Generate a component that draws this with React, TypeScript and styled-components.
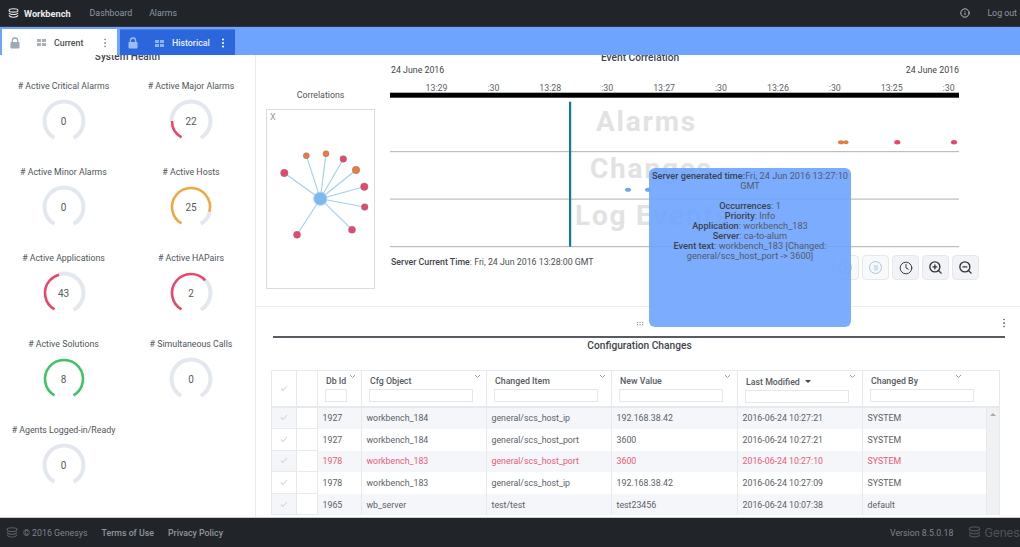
import React from 'react';
import styled, { createGlobalStyle } from 'styled-components';
import { Clock, EllipsisVertical, Info, Pause, Play, ZoomIn, ZoomOut } from 'lucide-react';

const GlobalStyle = createGlobalStyle`
  html, body {
    margin: 0;
    padding: 0;
    height: 100%;
    overflow: hidden;
    background: #fff;
    font-family: Roboto, "Liberation Sans", sans-serif;
    font-size: 8.8px;
    color: #4a4f55;
  }
  * { box-sizing: border-box; }
`;

const Page = styled.div`
  width: 1020px;
  height: 547px;
  display: flex;
  flex-direction: column;
  overflow: hidden;
  position: relative;
`;

const Header = styled.header`
  height: 27px;
  flex: none;
  background: #212429;
  border-bottom: 1px solid #34383e;
  display: flex;
  align-items: center;
  padding: 0 3px 0 8px;
  color: #8f98a3;
  position: relative;
  z-index: 3;
`;

const Brand = styled.div`
  display: flex;
  align-items: center;
  gap: 5px;
  color: #e9ecef;
  font-weight: 700;
  font-size: 9.2px;
  margin-right: 19px;
`;

const NavLink = styled.a`
  margin-right: 17px;
  font-size: 8.8px;
`;

const HeaderRight = styled.div`
  margin-left: auto;
  display: flex;
  align-items: center;
  gap: 17px;
  font-size: 8.8px;
`;

const TabBar = styled.div`
  height: 28px;
  flex: none;
  background: #6ea3fe;
  display: flex;
  padding: 2px 0 0 2px;
  gap: 3px;
  position: relative;
  z-index: 2;
`;

const Tab = styled.div<{ $active?: boolean }>`
  width: 115px;
  height: 26px;
  display: flex;
  align-items: center;
  padding: 1px 0 0 8px;
  font-size: 8.8px;
  font-weight: 500;
  background: ${p => (p.$active ? '#fff' : '#2c66dc')};
  color: ${p => (p.$active ? '#4a4f55' : '#e8f0ff')};
  border-top: ${p => (p.$active ? 'none' : '1px solid #4a80e8')};
`;

const TabName = styled.span`
  width: 45px;
  margin-left: 8px;
  white-space: nowrap;
`;

const GridGlyph = styled.span<{ $light?: boolean }>`
  display: grid;
  grid-template-columns: 4px 4px;
  grid-auto-rows: 3px;
  gap: 1px;
  margin-left: 17px;
  span {
    background: ${p => (p.$light ? '#8fb4f5' : '#a9afb7')};
  }
`;

const Dots = styled.span<{ $color: string }>`
  display: inline-flex;
  color: ${p => p.$color};
`;

const Body = styled.main`
  flex: 1;
  min-height: 0;
  display: flex;
`;

const HealthPanel = styled.section`
  width: 256px;
  flex: none;
  border-right: 1px solid #e8ebef;
  text-align: center;
`;

const HealthTitle = styled.h2`
  margin: -5px 0 0;
  font-size: 10px;
  line-height: 13px;
  font-weight: 500;
  color: #3f444a;
`;

const GaugeGrid = styled.div`
  display: grid;
  grid-template-columns: 127px 128px;
  grid-auto-rows: 86px;
  margin-top: 17px;
`;

const GaugeCell = styled.div`
  display: flex;
  flex-direction: column;
  align-items: center;
`;

const GaugeLabel = styled.div`
  height: 13px;
  line-height: 13px;
  font-size: 8.8px;
  white-space: nowrap;
  color: #50555b;
`;

const GaugeDial = styled.div`
  position: relative;
  width: 46px;
  height: 46px;
  margin-top: 5px;
`;

const GaugeValue = styled.span`
  position: absolute;
  inset: 0;
  display: flex;
  align-items: center;
  justify-content: center;
  font-size: 10px;
  color: #565b61;
`;

const RightColumn = styled.div`
  flex: 1;
  min-width: 0;
  display: flex;
  flex-direction: column;
`;

const CorrelationPanel = styled.section`
  height: 252px;
  flex: none;
  border-bottom: 1px solid #e8ebef;
  display: flex;
  padding-left: 10px;
`;

const GraphColumn = styled.div`
  width: 109px;
  flex: none;
  padding-top: 34px;
  text-align: center;
`;

const GraphTitle = styled.div`
  font-size: 8.8px;
  line-height: 12px;
  color: #50555b;
  margin-bottom: 8px;
`;

const GraphBox = styled.div`
  position: relative;
  height: 180px;
  border: 1px solid #dcdcdc;
`;

const CloseX = styled.span`
  position: absolute;
  left: 3px;
  top: 2px;
  font-size: 9px;
  color: #9a9a9a;
`;

const TimelineColumn = styled.div`
  width: 569px;
  margin-left: 15px;
  flex: none;
`;

const EventTitle = styled.h2`
  margin: -3px 0 0;
  text-align: center;
  font-size: 10.2px;
  line-height: 12px;
  font-weight: 500;
  color: #3f444a;
  padding-right: 69px;
`;

const DateRow = styled.div`
  display: flex;
  justify-content: space-between;
  padding-left: 1px;
  font-size: 8.8px;
  line-height: 12px;
  color: #3f444a;
`;

const ChartFrame = styled.svg`
  display: block;
  margin-top: 3px;
`;

const ServerTime = styled.div`
  margin-top: 7px;
  padding-left: 1px;
  font-size: 8.8px;
  line-height: 12px;
  b { font-weight: 500; color: #3f444a; }
`;

const Controls = styled.div`
  display: flex;
  gap: 3px;
  margin-left: 442px;
  margin-top: -13px;
`;

const ControlButton = styled.button<{ $faded?: boolean }>`
  width: 27px;
  height: 25px;
  flex: none;
  padding: 0;
  display: flex;
  align-items: center;
  justify-content: center;
  background: ${p => (p.$faded ? '#f7f9fb' : '#f1f3f6')};
  border: 1px solid #e5e8ec;
  border-radius: 4px;
  color: ${p => (p.$faded ? '#a9c6e2' : '#31363c')};
`;

const FadedCircle = styled.span`
  width: 13px;
  height: 13px;
  border: 1px solid #a9c6e2;
  border-radius: 50%;
  display: flex;
  align-items: center;
  justify-content: center;
`;

const Tooltip = styled.div`
  position: absolute;
  left: 649px;
  top: 168px;
  width: 202px;
  height: 159px;
  padding: 3px 2px;
  background: rgba(110, 163, 254, 0.9);
  border-radius: 6px;
  text-align: center;
  font-size: 9.2px;
  line-height: 10px;
  color: #545b68;
  z-index: 4;
  b { font-weight: 500; color: #3c424c; }
`;

const TipGap = styled.div`
  height: 10px;
`;

const ConfigPanel = styled.section`
  flex: 1;
  min-height: 0;
  overflow: hidden;
  padding: 0 14px 0 17px;
`;

const PanelHandle = styled.div`
  height: 31px;
  display: flex;
  align-items: center;
  justify-content: flex-end;
  border-bottom: 2px solid #575c62;
  color: #6d737a;
  position: relative;
  padding-top: 2px;
  margin-right: 1px;
`;

const HandleMenu = styled(EllipsisVertical)`
  margin-right: -5px;
`;

const Grip = styled.span`
  position: absolute;
  left: 363px;
  top: 14px;
  width: 8px;
  height: 5px;
  background-image: radial-gradient(#3f444a 0.8px, transparent 0.9px);
  background-size: 2.7px 2.5px;
`;

const ConfigTitle = styled.h3`
  margin: 1px 0 0;
  text-align: center;
  font-size: 10.2px;
  line-height: 13px;
  font-weight: 500;
  color: #3f444a;
`;

const TableFrame = styled.div`
  margin-top: 18px;
  margin-left: -2px;
  width: 729px;
  border: 1px solid #e6eaef;
  border-bottom: none;
`;

const HeadRow = styled.div`
  display: grid;
  grid-template-columns: 25px 21px 44px 125px 125px 126px 125px 1fr;
  height: 36.5px;
  border-bottom: 2px solid #e6eaef;
`;

const HeadCell = styled.div<{ $sorted?: boolean }>`
  position: relative;
  border-right: 1px solid #e6eaef;
  padding: ${p => (p.$sorted ? '5px' : '4px')} 8px 0 8px;
  font-size: 8.8px;
  font-weight: 500;
  line-height: 12px;
  color: #565b61;
  white-space: nowrap;
  &:last-child { border-right: none; }
`;

const CheckHead = styled(HeadCell)`
  display: flex;
  align-items: center;
  justify-content: center;
  padding: 0;
`;

const Chevron = styled.svg<{ $right: number }>`
  position: absolute;
  right: ${p => p.$right}px;
  top: 3px;
`;

const FilterInput = styled.div<{ $w: number }>`
  width: ${p => p.$w}px;
  height: 13px;
  margin: 2px 0 0 -1px;
  border: 1px solid #e3e8ee;
  background: #fff;
`;

const SortCaret = styled.i`
  display: inline-block;
  margin-left: 5px;
  vertical-align: 2px;
  border-left: 3px solid transparent;
  border-right: 3px solid transparent;
  border-top: 3px solid #3f444a;
`;

const Row = styled.div<{ $striped: boolean; $alert?: boolean }>`
  display: grid;
  grid-template-columns: 25px 21px 44px 125px 125px 126px 125px 124px 12px;
  height: 21.6px;
  background: ${p => (p.$striped ? '#f4f6f9' : '#fff')};
  color: ${p => (p.$alert ? '#ea5a78' : '#5c6167')};
`;

const Cell = styled.div`
  display: flex;
  align-items: center;
  padding-left: 4.5px;
  border-right: 1px solid #e6eaef;
  font-size: 8.8px;
  white-space: nowrap;
`;

const CheckCell = styled(Cell)<{ $striped: boolean }>`
  justify-content: center;
  padding: 0;
  background: ${p => (p.$striped ? '#f4f6f9' : '#fff')};
  border-bottom: 1px solid #e6eaef;
`;

const ScrollCell = styled.div`
  background: #f0f1f2;
  display: flex;
  justify-content: center;
  padding-top: 5px;
`;

const ScrollArrow = styled.i`
  border-left: 3px solid transparent;
  border-right: 3px solid transparent;
  border-bottom: 3px solid #a8abaf;
  height: 0;
`;

const Footer = styled.footer`
  height: 30px;
  flex: none;
  background: #212429;
  border-top: 1px solid #c9ccd0;
  display: flex;
  align-items: center;
  padding-left: 6px;
  color: #7e858d;
  font-size: 8.8px;
  overflow: hidden;
`;

const Copyright = styled.span`
  margin-left: 5px;
`;

const FooterLink = styled.a`
  font-weight: 500;
  color: #8f969e;
  margin-left: 14px;
`;

const FooterRight = styled.div`
  margin-left: auto;
  flex: none;
  display: flex;
  align-items: center;
  gap: 14px;
  margin-right: -12px;
`;

const GenesysWord = styled.span`
  display: flex;
  align-items: center;
  gap: 4px;
  font-size: 12.5px;
  color: #4e5359;
`;

const StackIcon = ({ size, color }: { size: number; color: string }) => (
  <svg width={size} height={size} viewBox="0 0 16 16" fill="none" stroke={color} strokeWidth="1.5">
    <ellipse cx="8" cy="3.5" rx="6.5" ry="2.5" />
    <path d="M1.5 7c.6 1.6 3.2 2.6 6.5 2.6s5.9-1 6.5-2.6" />
    <path d="M1.5 10.5c.6 1.6 3.2 2.8 6.5 2.8s5.9-1.2 6.5-2.8" />
  </svg>
);

const LockIcon = ({ color }: { color: string }) => (
  <svg width="10" height="12" viewBox="0 0 10 12" fill="none">
    <path d="M2.4 5.5V3.6a2.6 2.6 0 0 1 5.2 0v1.9" stroke={color} strokeWidth="1.3" />
    <rect x="0.5" y="5" width="9" height="6.5" rx="0.8" fill={color} />
  </svg>
);

const Gauge = ({ label, value, share, color }: { label: string; value: number; share: number; color: string }) => {
  // the dial is a 300 degree arc, open at the bottom
  const c = 23;
  const arc = (r: number) => {
    const point = (deg: number) => {
      const a = (deg * Math.PI) / 180;
      return `${c + r * Math.sin(a)} ${c + r * Math.cos(a)}`;
    };
    return `M ${point(-30)} A ${r} ${r} 0 1 1 ${point(30)}`;
  };
  return (
    <GaugeCell>
      <GaugeLabel>{label}</GaugeLabel>
      <GaugeDial>
        <svg width="46" height="46" viewBox="0 0 46 46" fill="none">
          <path d={arc(19.5)} stroke="#e3e8ef" strokeWidth="4" pathLength={100} strokeDasharray={`0 ${share} ${100 - share} 100`} />
          {share > 0 && (
            <path d={arc(19)} stroke={color} strokeWidth="2.6" pathLength={100} strokeDasharray={`${share} 100`} />
          )}
        </svg>
        <GaugeValue>{value}</GaugeValue>
      </GaugeDial>
    </GaugeCell>
  );
};

const RED = '#e8476b';
const gauges = [
  { label: '# Active Critical Alarms', value: 0, share: 0, color: RED },
  { label: '# Active Major Alarms', value: 22, share: 20, color: RED },
  { label: '# Active Minor Alarms', value: 0, share: 0, color: RED },
  { label: '# Active Hosts', value: 25, share: 85, color: '#f2a641' },
  { label: '# Active Applications', value: 43, share: 45, color: RED },
  { label: '# Active HAPairs', value: 2, share: 66, color: RED },
  { label: '# Active Solutions', value: 8, share: 100, color: '#3fc463' },
  { label: '# Simultaneous Calls', value: 0, share: 0, color: RED },
  { label: '# Agents Logged-in/Ready', value: 0, share: 0, color: RED },
];

const graphNodes = [
  { x: 17.3, y: 63, r: 3.7, c: RED },
  { x: 39.3, y: 45.7, r: 3, c: '#ea7b3d' },
  { x: 59, y: 43.7, r: 3, c: '#ea7b3d' },
  { x: 76.3, y: 49, r: 3.3, c: RED },
  { x: 89, y: 60, r: 3.7, c: '#ea7b3d' },
  { x: 97.3, y: 76.7, r: 3.7, c: RED },
  { x: 97.7, y: 97, r: 3.3, c: RED },
  { x: 85, y: 119.7, r: 3.5, c: RED },
  { x: 30, y: 124.7, r: 3.5, c: RED },
];

const CorrelationGraph = () => (
  <svg width="107" height="178" viewBox="0 0 107 178">
    {graphNodes.map(n => (
      <line key={`${n.x}-${n.y}`} x1="53.3" y1="88.7" x2={n.x} y2={n.y} stroke="#a2d0e8" strokeWidth="1.1" />
    ))}
    {graphNodes.map(n => (
      <circle key={`${n.x}/${n.y}`} cx={n.x} cy={n.y} r={n.r} fill={n.c} stroke="#8d7078" strokeWidth="0.5" />
    ))}
    <circle cx="53.3" cy="88.7" r="6.6" fill="#7db9ee" stroke="#a8d2f2" strokeWidth="1" />
  </svg>
);

const ticks = ['13:29', ':30', '13:28', ':30', '13:27', ':30', '13:26', ':30', '13:25', ':30'];

// timeline plot, x and y are relative to the frame that starts at page x 390, y 79
const Timeline = () => (
  <ChartFrame width="569" height="170" viewBox="0 0 569 170" fontFamily="Roboto, sans-serif">
    {ticks.map((t, i) => (
      <text key={i} x={46.5 + i * 56.9} y={12} textAnchor="middle" fontSize="8.8" fill="#5c6167">{t}</text>
    ))}
    <rect x="0" y="13.7" width="569" height="5" fill="#000" />
    <g fontSize="28" fontWeight="700" fill="#e2e2e2" letterSpacing="1.8">
      <text x="206" y="52">Alarms</text>
      <text x="200" y="99">Changes</text>
      <text x="185" y="146">Log Events</text>
    </g>
    <g fill="#bdbdbd">
      <rect x="0" y="72" width="569" height="1.2" />
      <rect x="0" y="119.5" width="569" height="1.2" />
      <rect x="0" y="167" width="569" height="1.2" />
    </g>
    <rect x="179" y="22.7" width="2.2" height="145" fill="#0e7c9f" />
    <ellipse cx="238" cy="110.7" rx="3" ry="2" fill="#6ea9ee" />
    <ellipse cx="258" cy="110.7" rx="3" ry="2" fill="#6ea9ee" />
    <ellipse cx="451" cy="63.3" rx="3" ry="2" fill="#ea7b3d" />
    <ellipse cx="456" cy="63.3" rx="2.5" ry="2" fill="#ea7b3d" />
    <ellipse cx="507.3" cy="63.3" rx="3" ry="2.2" fill={RED} />
    <ellipse cx="564" cy="63.3" rx="3" ry="2.2" fill={RED} />
  </ChartFrame>
);

const tableRows = [
  ['1927', 'workbench_184', 'general/scs_host_ip', '192.168.38.42', '2016-06-24 10:27:21', 'SYSTEM'],
  ['1927', 'workbench_184', 'general/scs_host_port', '3600', '2016-06-24 10:27:21', 'SYSTEM'],
  ['1978', 'workbench_183', 'general/scs_host_port', '3600', '2016-06-24 10:27:10', 'SYSTEM'],
  ['1978', 'workbench_183', 'general/scs_host_ip', '192.168.38.42', '2016-06-24 10:27:09', 'SYSTEM'],
  ['1965', 'wb_server', 'test/test', 'test23456', '2016-06-24 10:07:38', 'default'],
];

const heads = [
  { name: 'Db Id', w: 22, chevron: 5 },
  { name: 'Cfg Object', w: 104, chevron: 5 },
  { name: 'Changed Item', w: 104, chevron: 5 },
  { name: 'New Value', w: 104, chevron: 6 },
  { name: 'Last Modified', w: 104, chevron: 6, sorted: true },
  { name: 'Changed By', w: 104, chevron: 37 },
];

const Tick = () => (
  <svg width="8" height="7" viewBox="0 0 8 7" fill="none" stroke="#d3d6da" strokeWidth="1.1">
    <path d="M1 3.5 3 5.5 7 1" />
  </svg>
);

const App: React.FC = () => (
  <Page>
    <GlobalStyle />
    <Header>
      <Brand>
        <StackIcon size={11} color="#e9ecef" />
        Workbench
      </Brand>
      <NavLink>Dashboard</NavLink>
      <NavLink>Alarms</NavLink>
      <HeaderRight>
        <Info size={10} strokeWidth={2.2} color="#c5cad0" />
        <span>Log out</span>
      </HeaderRight>
    </Header>
    <TabBar>
      <Tab $active>
        <LockIcon color="#a0a8b2" />
        <GridGlyph><span /><span /><span /><span /></GridGlyph>
        <TabName>Current</TabName>
        <Dots $color="#8a9098"><EllipsisVertical size={12} strokeWidth={2} /></Dots>
      </Tab>
      <Tab>
        <LockIcon color="#9dbcf5" />
        <GridGlyph $light><span /><span /><span /><span /></GridGlyph>
        <TabName>Historical</TabName>
        <Dots $color="#fff"><EllipsisVertical size={12} strokeWidth={2.4} /></Dots>
      </Tab>
    </TabBar>
    <Body>
      <HealthPanel>
        <HealthTitle>System Health</HealthTitle>
        <GaugeGrid>
          {gauges.map(g => <Gauge key={g.label} {...g} />)}
        </GaugeGrid>
      </HealthPanel>
      <RightColumn>
        <CorrelationPanel>
          <GraphColumn>
            <GraphTitle>Correlations</GraphTitle>
            <GraphBox>
              <CloseX>X</CloseX>
              <CorrelationGraph />
            </GraphBox>
          </GraphColumn>
          <TimelineColumn>
            <EventTitle>Event Correlation</EventTitle>
            <DateRow><span>24 June 2016</span><span>24 June 2016</span></DateRow>
            <Timeline />
            <ServerTime><b>Server Current Time</b>: Fri, 24 Jun 2016 13:28:00 GMT</ServerTime>
            <Controls>
              <ControlButton $faded><FadedCircle><Play size={6} /></FadedCircle></ControlButton>
              <ControlButton $faded><FadedCircle><Pause size={6} /></FadedCircle></ControlButton>
              <ControlButton><Clock size={14} strokeWidth={1.6} /></ControlButton>
              <ControlButton><ZoomIn size={15} strokeWidth={2.2} /></ControlButton>
              <ControlButton><ZoomOut size={15} strokeWidth={2.2} /></ControlButton>
            </Controls>
          </TimelineColumn>
        </CorrelationPanel>
        <ConfigPanel>
          <PanelHandle>
            <Grip />
            <HandleMenu size={12} strokeWidth={2} />
          </PanelHandle>
          <ConfigTitle>Configuration Changes</ConfigTitle>
          <TableFrame>
            <HeadRow>
              <CheckHead><Tick /></CheckHead>
              <HeadCell />
              {heads.map(h => (
                <HeadCell key={h.name} $sorted={h.sorted}>
                  {h.name}
                  {h.sorted && <SortCaret />}
                  <Chevron $right={h.chevron} width="7" height="5" viewBox="0 0 7 5" fill="none" stroke="#8e9399" strokeWidth="0.9">
                    <path d="M1 1 3.5 3.5 6 1" />
                  </Chevron>
                  <FilterInput $w={h.w} />
                </HeadCell>
              ))}
            </HeadRow>
            {tableRows.map((row, i) => (
              <Row key={i} $striped={i % 2 === 0} $alert={i === 2}>
                <CheckCell $striped={i % 2 === 0}><Tick /></CheckCell>
                <CheckCell $striped={false} />
                {row.map((v, j) => <Cell key={j}>{v}</Cell>)}
                <ScrollCell>{i === 0 && <ScrollArrow />}</ScrollCell>
              </Row>
            ))}
          </TableFrame>
        </ConfigPanel>
      </RightColumn>
    </Body>
    <Tooltip>
      <b>Server generated time:</b>Fri, 24 Jun 2016 13:27:10 GMT
      <TipGap />
      <div><b>Occurrences</b>: 1</div>
      <div><b>Priority</b>: Info</div>
      <div><b>Application</b>: workbench_183</div>
      <div><b>Server</b>: ca-to-alum</div>
      <div><b>Event text</b>: workbench_183 [Changed: general/scs_host_port -&gt; 3600]</div>
    </Tooltip>
    <Footer>
      <StackIcon size={12} color="#5a6067" />
      <Copyright>© 2016 Genesys</Copyright>
      <FooterLink>Terms of Use</FooterLink>
      <FooterLink>Privacy Policy</FooterLink>
      <FooterRight>
        <span>Version 8.5.0.18</span>
        <GenesysWord><StackIcon size={13} color="#4e5359" />Genesys</GenesysWord>
      </FooterRight>
    </Footer>
  </Page>
);

export default App;
